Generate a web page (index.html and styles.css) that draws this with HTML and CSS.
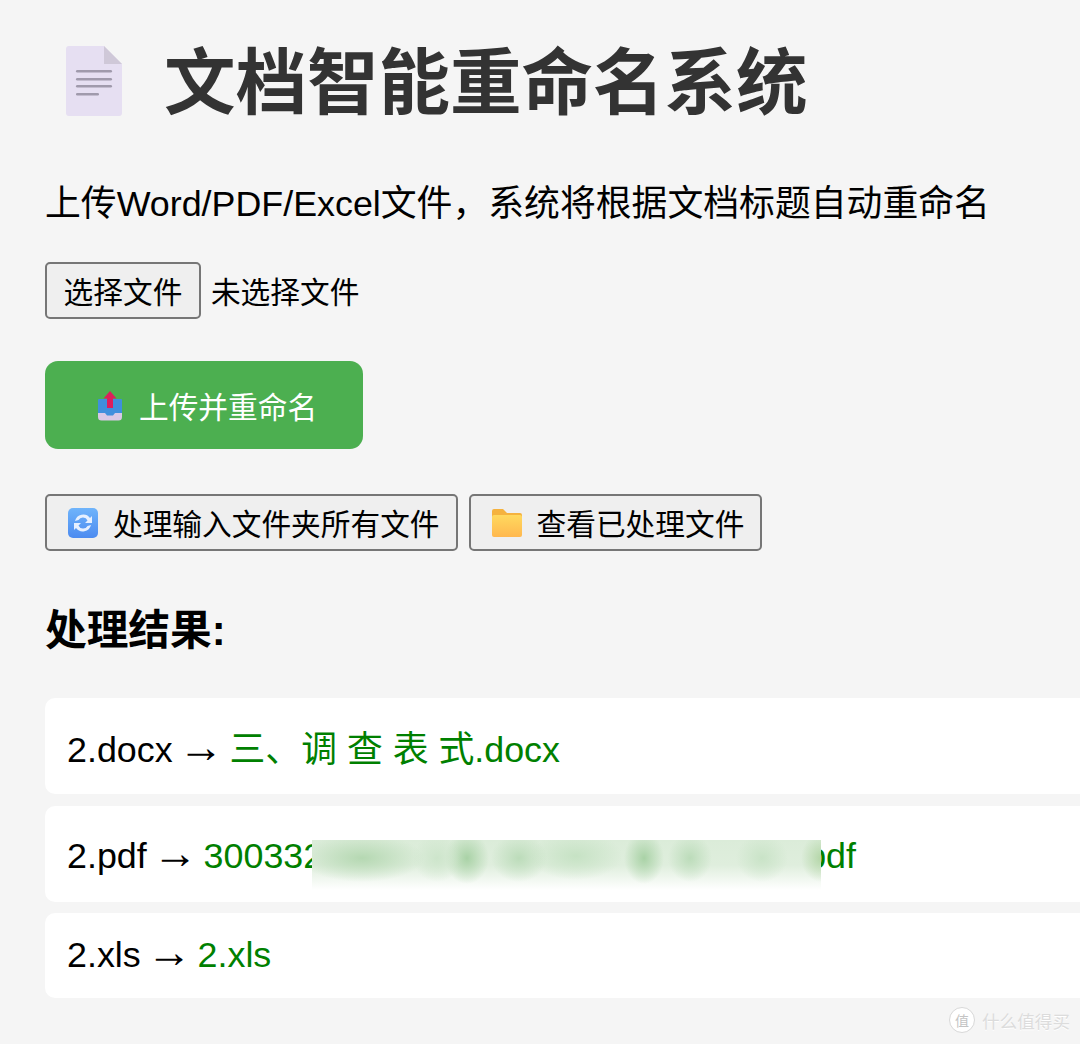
FILE: index.html
```html
<!DOCTYPE html>
<html lang="zh-CN">
<head>
    <meta charset="UTF-8">
    <title>文档智能重命名系统</title>
    <link rel="stylesheet" href="styles.css">
</head>
<body>
    <h1 class="title">
        <svg class="doc-icon" viewBox="0 0 56 72" width="56" height="72">
            <path d="M3 1H38L56 19V68a3 3 0 0 1-3 3H3a3 3 0 0 1-3-3V4a3 3 0 0 1 3-3z" fill="#e6dff2"/>
            <path d="M38 1L56 19H38z" fill="#cfc8d8"/>
            <rect x="10" y="25" width="36" height="2.6" rx="1.3" fill="#a09aac"/>
            <rect x="10" y="33" width="36" height="2.6" rx="1.3" fill="#a09aac"/>
            <rect x="10" y="40" width="36" height="2.6" rx="1.3" fill="#a09aac"/>
            <rect x="10" y="48" width="23" height="2.6" rx="1.3" fill="#a09aac"/>
        </svg>
        文档智能重命名系统
    </h1>
    <p class="subtitle">上传Word/PDF/Excel文件，系统将根据文档标题自动重命名</p>

    <div class="file-row">
        <button class="btn">选择文件</button>
        <span>未选择文件</span>
    </div>

    <button class="upload-btn">
        <svg class="upload-icon" viewBox="0 0 26 30" width="26" height="30">
            <path d="M1 10h24v16a3.500 3.500 0 0 1-3.500 3.500h-17A3.500 3.500 0 0 1 1 26z" fill="#d8c8e6"/>
            <path d="M2 8h22a1 1 0 0 1 1 1v13h-7l-2 2.500h-6L8 22H1V9a1 1 0 0 1 1-1z" fill="#3f8fdd"/>
            <path d="M13 0l6.500 7.500H16v9.500h-6V7.500H6.500z" fill="#dc1f5c"/>
        </svg>
        上传并重命名
    </button>

    <div class="action-row">
        <button class="btn btn-icon">
            <svg viewBox="0 0 30 30" width="30" height="30">
                <defs>
                    <linearGradient id="blueFill" x1="0" y1="0" x2="0" y2="1">
                        <stop offset="0" stop-color="#6fb4fb"/>
                        <stop offset="1" stop-color="#4c8bf0"/>
                    </linearGradient>
                </defs>
                <rect width="30" height="30" rx="5" fill="url(#blueFill)"/>
                <path d="M7 13a8.500 8.500 0 0 1 15-3l2-2v7h-7l2.500-2.500a5 5 0 0 0-9-.5z" fill="#e6f0ff"/>
                <path d="M23 17a8.500 8.500 0 0 1-15 3l-2 2v-7h7l-2.500 2.500a5 5 0 0 0 9 .5z" fill="#e6f0ff"/>
            </svg>
            处理输入文件夹所有文件
        </button>
        <button class="btn btn-icon">
            <svg viewBox="0 0 30 28" width="30" height="28">
                <defs>
                    <linearGradient id="folderFill" x1="0" y1="0" x2="0" y2="1">
                        <stop offset="0" stop-color="#ffd95e"/>
                        <stop offset="1" stop-color="#ffb84f"/>
                    </linearGradient>
                </defs>
                <path d="M2 0h9l4 4h13a2 2 0 0 1 2 2v4H0V2a2 2 0 0 1 2-2z" fill="#f5b23e"/>
                <path d="M2 6h26a2 2 0 0 1 2 2v18a2 2 0 0 1-2 2H2a2 2 0 0 1-2-2V8a2 2 0 0 1 2-2z" fill="url(#folderFill)"/>
            </svg>
            查看已处理文件
        </button>
    </div>

    <h3 class="result-title">处理结果:</h3>

    <div class="result-list">
        <div class="result-item">2.docx <span class="arrow">→</span> <span class="new-name">三、调 查 表 式.docx</span></div>
        <div class="result-item result-item-tall">2.pdf <span class="arrow">→</span> <span class="new-name">300332<span class="hidden-part"></span>pdf</span>
            <div class="blur-patch"></div>
        </div>
        <div class="result-item">2.xls <span class="arrow">→</span> <span class="new-name">2.xls</span></div>
    </div>

    <div class="watermark"><span class="wm-badge">值</span>什么值得买</div>
</body>
</html>
```

FILE: styles.css
```css
html, body { height: 100%; }
body { margin: 0; padding: 0 0 0 45px; background: #f5f5f5; font-family: "Liberation Sans", "Noto Sans CJK SC", sans-serif; overflow: hidden; position: relative; box-sizing: border-box; }
button { font-family: inherit; }
.title { display: flex; align-items: center; gap: 42px; margin: 25px 0 0 21px; font-size: 71.5px; font-weight: bold; color: #333; }
.doc-icon { flex: none; margin-top: 7px; }
.subtitle { margin: 45px 0 0 0; font-size: 35.85px; color: #000; }
.file-row { display: flex; align-items: center; gap: 10px; margin-top: 36px; font-size: 29.7px; }
.btn { height: 57px; padding: 0 16.6px; background: #efefef; border: 2px solid #767676; border-radius: 5px; font-size: 29.7px; color: #000; }
.btn-icon { display: flex; align-items: center; gap: 15px; padding: 0 16px 0 21px; }
.upload-btn { display: flex; align-items: center; gap: 16px; width: 318px; height: 88px; margin-top: 42px; padding: 0 0 0 52px; background: #4caf50; border: none; border-radius: 13px; font-size: 29.7px; color: #fff; }
.upload-icon { margin-top: 2px; }
.action-row { display: flex; gap: 11px; margin-top: 45px; }
.result-title { margin: 46px 0 0 0; font-size: 41.7px; font-weight: bold; color: #000; }
.result-list { display: flex; flex-direction: column; gap: 11.500px; width: 1100px; margin-top: 41px; }
.result-item { position: relative; padding: 22px; background: #fff; border-radius: 10px; font-size: 35.85px; color: #000; }
.result-item-tall { padding: 30px 22px 25px; }
.arrow { font-size: 45px; line-height: 0; margin: 0 -4px; }
.new-name { color: green; }
.hidden-part { display: inline-block; width: 483px; }
.blur-patch {
    position: absolute;
    left: 267px;
    top: 34px;
    width: 509px;
    height: 50px;
    background:
        radial-gradient(ellipse 62px 24px at 50px 18px, #b5d8b2, transparent),
        radial-gradient(ellipse 24px 24px at 125px 18px, #cde5cb, transparent),
        radial-gradient(ellipse 22px 26px at 155px 18px, #a9d2a6, transparent),
        radial-gradient(ellipse 28px 24px at 207px 18px, #bcdcba, transparent),
        radial-gradient(ellipse 46px 24px at 264px 16px, #c6e2c4, transparent),
        radial-gradient(ellipse 20px 26px at 332px 18px, #a9d2a6, transparent),
        radial-gradient(ellipse 22px 24px at 378px 18px, #bcdcba, transparent),
        radial-gradient(ellipse 26px 24px at 450px 18px, #c9e3c7, transparent),
        radial-gradient(ellipse 20px 24px at 509px 18px, #b4d6a8, transparent),
        linear-gradient(#dbecd9 0, #dfeedd 50%, #fff 100%);
}
.watermark { position: absolute; right: 10px; bottom: 11px; display: flex; align-items: center; gap: 7px; font-size: 17.6px; color: #dcdcdc; text-shadow: 0 1px 0 #fff; }
.wm-badge { display: flex; align-items: center; justify-content: center; width: 24px; height: 24px; background: #fff; border: 1px solid #d8d8d8; border-radius: 50%; font-size: 14px; color: #c4c4c4; }
```
